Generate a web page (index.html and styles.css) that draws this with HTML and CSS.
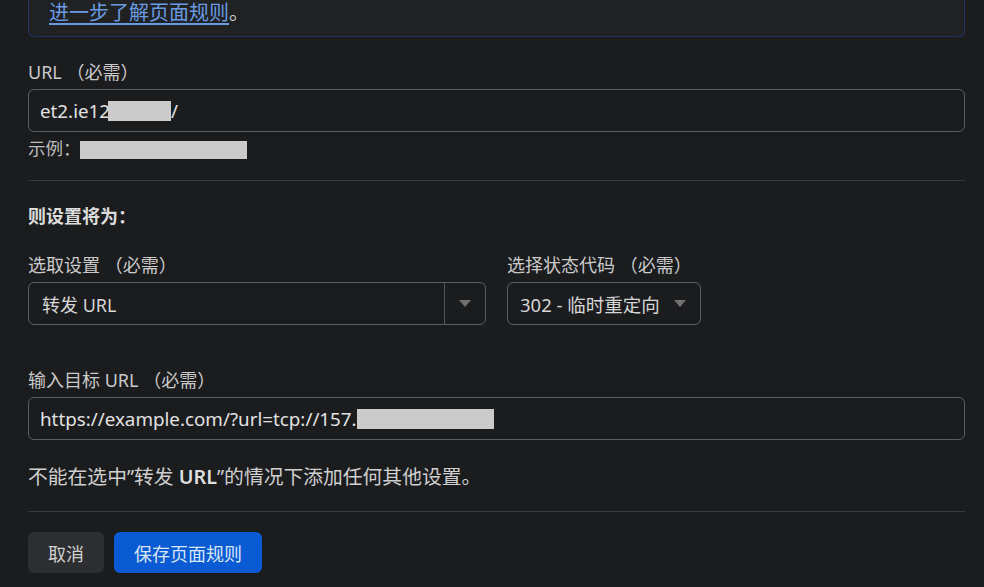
FILE: index.html
```html
<!DOCTYPE html>
<html lang="zh-CN">
<head>
  <meta charset="UTF-8">
  <title>页面规则</title>
  <link rel="stylesheet" href="styles.css">
</head>
<body>
  <div class="page">
    <div class="notice">
      <a href="#" class="notice-link">进一步了解页面规则</a>。
    </div>

    <div class="field field-url">
      <label class="label">URL （必需）</label>
      <div class="input">et2.ie12<span class="mask mask-short"></span>/</div>
      <div class="example">示例：<span class="mask mask-example"></span></div>
    </div>

    <hr class="rule">

    <h3 class="section-title">则设置将为：</h3>

    <div class="row">
      <div class="field">
        <label class="label">选取设置 （必需）</label>
        <div class="select select-wide">
          <span class="select-value">转发 URL</span>
          <span class="select-toggle"><span class="caret"></span></span>
        </div>
      </div>
      <div class="field">
        <label class="label">选择状态代码 （必需）</label>
        <div class="select select-small">
          <span class="select-value">302 - 临时重定向</span>
          <span class="caret"></span>
        </div>
      </div>
    </div>

    <div class="field field-target">
      <label class="label">输入目标 URL （必需）</label>
      <div class="input">https://example.com/?url=tcp://157.<span class="mask mask-long"></span></div>
    </div>

    <p class="note">不能在选中”转发 <b>URL</b>”的情况下添加任何其他设置。</p>

    <hr class="rule rule-bottom">

    <div class="actions">
      <button class="btn btn-cancel">取消</button>
      <button class="btn btn-save">保存页面规则</button>
    </div>
  </div>
</body>
</html>
```

FILE: styles.css
```css
html, body { margin: 0; height: 100%; overflow: hidden; }
body {
  background: #1b1c1e; color: #d2d2d2;
  font-family: 'Noto Sans', 'Noto Sans CJK SC', sans-serif; font-size: 18px;
}
.page { padding: 0 19px 0 28px; }

/* 顶部提示框 */
.notice {
  margin-top: -14px; padding: 14px 20px 10px;
  background: #1f2123; border: 1px solid #1e3566; border-top: none;
  border-radius: 0 0 6px 6px; line-height: 26px; color: #cfcfcf; font-size: 20px;
}
.notice-link { color: #6a9be2; text-decoration: underline; text-underline-offset: 3px; }

/* 表单字段 */
.label { display: block; line-height: 24px; color: #cacaca; margin-bottom: 5px; font-size: 18px; }
.field-url { margin-top: 23px; }
.input {
  display: flex; align-items: center; height: 41px; padding: 0 11px;
  border: 1px solid #5c5d60; border-radius: 6px; color: #e2e2e2; font-size: 18.8px;
}
.mask { display: inline-block; height: 20px; background: #cbcbcb; }
.mask-short { width: 63px; margin-left: -2px; }
.mask-long { width: 137px; }
.mask-example { width: 167px; height: 18px; vertical-align: middle; margin-left: -1px; }
.example { margin-top: 4px; line-height: 24px; color: #bdbdbd; font-size: 17.5px; }

.rule { border: none; border-top: 1px solid #38393c; margin: 20px 0 0; }
.section-title { margin: 23px 0 0; line-height: 24px; font-size: 18px; font-weight: 700; color: #dcdcdc; }

.row { display: flex; gap: 21px; margin-top: 25px; }
.select {
  display: flex; align-items: center; height: 41px;
  border: 1px solid #5c5d60; border-radius: 6px; color: #d6d6d6; box-sizing: content-box;
}
.select-wide { width: 456px; }
.select-wide .select-value { flex: 1; padding-left: 13px; }
.select-toggle {
  width: 40px; align-self: stretch; border-left: 1px solid #55565a;
  display: flex; align-items: center; justify-content: center;
}
.select-small { width: 192px; }
.select-small .select-value { flex: 1; padding-left: 12px; font-size: 18.5px; }
.select-small .caret { margin-right: 14px; }
.caret {
  width: 0; height: 0; border-left: 6px solid transparent; border-right: 6px solid transparent;
  border-top: 7px solid #707070;
}

.field-target { margin-top: 43px; }
.note { margin: 25px 0 0; line-height: 24px; color: #cfcfcf; font-size: 19.8px; }
.note b { color: #dedede; font-weight: 600; }
.rule-bottom { margin-top: 22px; }

/* 按钮 */
.actions { display: flex; gap: 10px; margin-top: 20px; }
.btn {
  height: 41px; border: none; border-radius: 6px; font-family: inherit; font-size: 18px;
  cursor: pointer; padding: 0 20px;
}
.btn-cancel { background: #2c2e31; color: #cfcfcf; width: 76px; padding: 0; }
.btn-save { background: #0a5bd3; color: #d8e6fb; width: 148px; padding: 0; }
```
